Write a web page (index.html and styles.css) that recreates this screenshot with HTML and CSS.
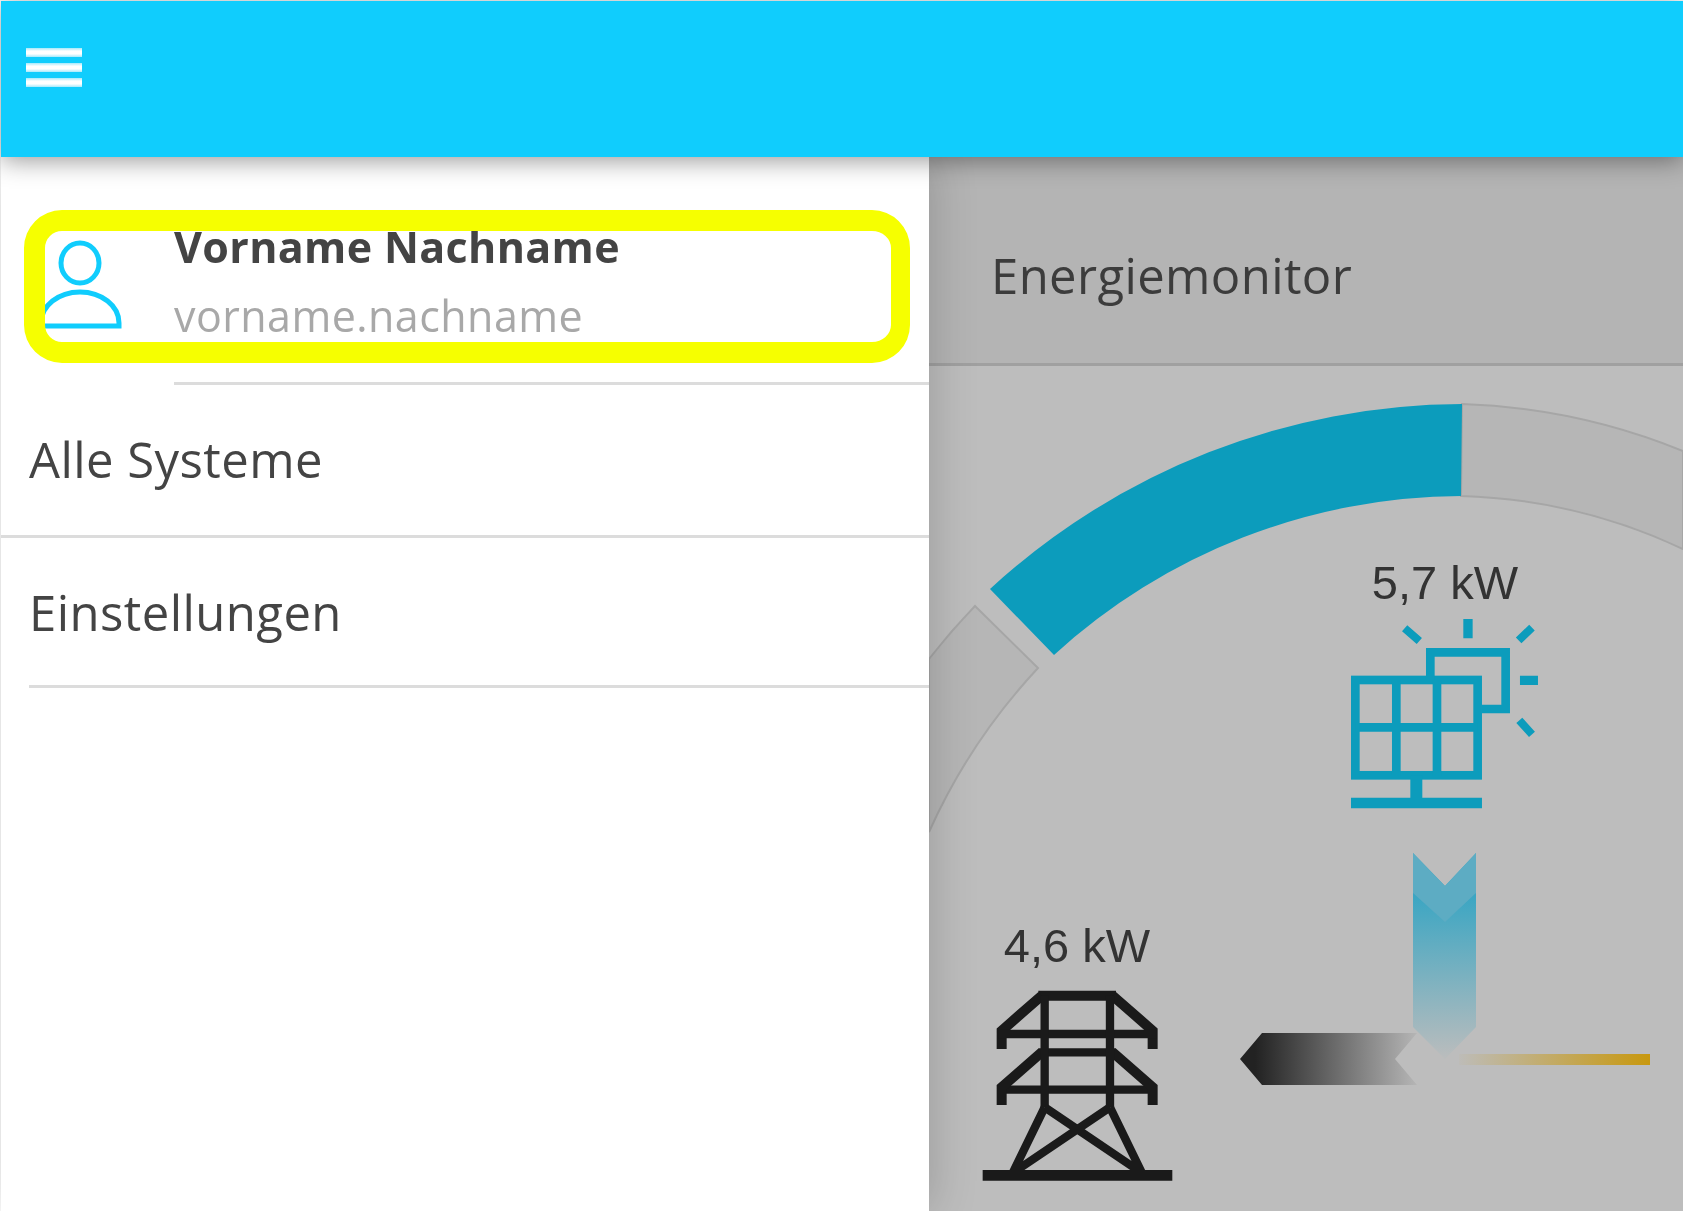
FILE: index.html
```html
<!DOCTYPE html>
<html lang="de">
<head>
<meta charset="utf-8">
<title>Energiemonitor</title>
<link rel="stylesheet" href="styles.css">
</head>
<body>
<div class="app">
  <header class="topbar">
    <button class="menu-btn" aria-label="Menü"><span></span><span></span><span></span></button>
  </header>
  <main class="content">
    <nav class="drawer">
      <div class="user-row">
        <svg class="user-icon" viewBox="0 0 80 90" aria-hidden="true">
          <ellipse cx="34" cy="22" rx="19" ry="20" class="user-stroke"/>
          <path d="M-5 85 V 82 A 39 31 0 0 1 73 82 V 85 Z" class="user-stroke"/>
        </svg>
        <div class="user-text">
          <div class="user-name">Vorname Nachname</div>
          <div class="user-login">vorname.nachname</div>
        </div>
        <div class="highlight"></div>
      </div>
      <div class="nav-item nav-first">Alle Systeme</div>
      <div class="nav-item nav-second">Einstellungen</div>
    </nav>
    <section class="panel">
      <div class="panel-title">Energiemonitor</div>
      <div class="diagram">
        <svg class="diagram-svg" viewBox="929 367 754 844" aria-label="Energiefluss">
          <defs>
            <linearGradient id="gSolar" x1="0" y1="890" x2="0" y2="1057" gradientUnits="userSpaceOnUse">
              <stop offset="0" stop-color="#36a5c3"/>
              <stop offset="1" stop-color="#36a5c3" stop-opacity="0.03"/>
            </linearGradient>
            <linearGradient id="gGrid" x1="1255" y1="0" x2="1417" y2="0" gradientUnits="userSpaceOnUse">
              <stop offset="0" stop-color="#222"/>
              <stop offset="1" stop-color="#222" stop-opacity="0.05"/>
            </linearGradient>
            <linearGradient id="gHome" x1="1459" y1="0" x2="1650" y2="0" gradientUnits="userSpaceOnUse">
              <stop offset="0" stop-color="#c8980f" stop-opacity="0.03"/>
              <stop offset="1" stop-color="#c8980f"/>
            </linearGradient>
          </defs>

          <path class="ring-rest" d="M975 607 L1038 669 A 598 598 0 0 0 929 833 L929 660 A 692 692 0 0 1 975 607 Z"/>
          <path class="ring-rest" d="M1462 405 A 640 640 0 0 1 1683 452 L1683 550 A 560 560 0 0 0 1461 497 Z"/>
          <path class="ring-fill" d="M990 590 A 701 701 0 0 1 1462 405 L1461 497 A 607 607 0 0 0 1054 656 Z"/>

          <text class="value" x="1445" y="600" text-anchor="middle">5,7 kW</text>
          <g class="solar" transform="translate(1280 540) scale(.3333)">
            <rect x="226" y="423" width="367" height="286"/>
            <path d="M349 423 V709 M471 423 V709 M226 565 H593"/>
            <path d="M451 423 V340 H677 V510 H606"/>
            <path class="stand" d="M409 709 V792"/>
            <path class="base" d="M213 792 H606"/>
            <path class="ray" d="M564 240 V298 M720 424 H774"/>
            <path class="ray-slant" d="M374 268 L418 306 M756 266 L716 304 M718 544 L756 586"/>
          </g>

          <path d="M1413 854 L1445 887 L1476 854 V1028 L1445 1060 L1413 1028 Z" fill="url(#gSolar)"/>
          <path d="M1413 854 L1445 887 L1476 854 V894 L1445 923 L1413 894 Z" fill="#5dacc3"/>
          <path d="M1240 1060 L1262 1034 H1417 L1395 1060 L1417 1086 H1262 Z" fill="url(#gGrid)"/>
          <rect x="1459" y="1055" width="191" height="11" fill="url(#gHome)"/>

          <text class="value" x="1077" y="963" text-anchor="middle">4,6 kW</text>
          <g class="tower" transform="translate(970 980) scale(.3333)">
            <path d="M205 50 H438"/>
            <path d="M215 50 L95 155 V210 M428 50 L548 155 V210"/>
            <path class="thin" d="M85 165 H560 M205 220 H438 M85 332 H560"/>
            <path d="M215 220 L95 325 V378 M428 220 L548 325 V378"/>
            <path class="thin" d="M224 50 V385 M420 50 V385"/>
            <path class="thin" d="M224 385 L128 582 M420 385 L516 582 M224 385 L510 578 M420 385 L134 578"/>
            <path class="base" d="M38 589 H607"/>
          </g>
        </svg>
      </div>
    </section>
  </main>
</div>
</body>
</html>
```
FILE: styles.css
```css
* { box-sizing: border-box; }

html, body {
  margin: 0;
  height: 100%;
  background: #fff;
  overflow: hidden;
}

body {
  font-family: "Open Sans", "Noto Sans", sans-serif;
  color: #444;
}

.app {
  height: 1211px;
  padding: 1px 0 0 1px;
  display: flex;
  flex-direction: column;
}

.topbar {
  position: relative;
  z-index: 3;
  flex: 0 0 156px;
  background: #10cdfd;
  box-shadow: 0 3px 24px rgba(0, 0, 0, .42);
  padding: 47px 0 0 25px;
}

.menu-btn {
  display: flex;
  flex-direction: column;
  gap: 6px;
  width: 56px;
  padding: 0;
  border: 0;
  background: none;
}

.menu-btn span {
  display: block;
  height: 9px;
  background: linear-gradient(#a5e9fb, #fff 35% 65%, #a5e9fb);
}

.content {
  flex: 1;
  display: flex;
  min-height: 0;
}

.drawer {
  position: relative;
  z-index: 2;
  flex: 0 0 928px;
  background: #fff;
  box-shadow: 0 0 46px rgba(0, 0, 0, .2);
}

.user-row {
  position: relative;
  display: flex;
  height: 228px;
  margin-left: 173px;
  border-bottom: 3px solid #dcdcdc;
  padding-top: 60px;
}

.user-icon {
  position: absolute;
  left: -128px;
  top: 84px;
  width: 80px;
  height: 90px;
  overflow: visible;
}

.user-stroke {
  fill: none;
  stroke: #10cdfd;
  stroke-width: 5;
}

.user-name,
.user-login,
.nav-item,
.panel-title,
.value {
  filter: blur(.3px);
}

.user-name {
  font-size: 43px;
  line-height: 60px;
  font-weight: 700;
  color: #444;
  letter-spacing: .35px;
}

.user-login {
  font-size: 43px;
  line-height: 60px;
  margin-top: 9px;
  color: #a8a8a8;
  letter-spacing: .45px;
}

.highlight {
  position: absolute;
  left: -150px;
  top: 53px;
  width: 886px;
  height: 153px;
  border: 21px solid #f6ff00;
  border-right-width: 19px;
  border-radius: 38px;
  pointer-events: none;
}

.nav-item {
  font-size: 49px;
  line-height: 66px;
  letter-spacing: .45px;
  color: #444;
}

.nav-first {
  height: 153px;
  padding: 41px 0 0 28px;
  border-bottom: 3px solid #dcdcdc;
}

.nav-second {
  height: 150px;
  margin-left: 28px;
  padding-top: 41px;
  border-bottom: 3px solid #dcdcdc;
}

.panel {
  flex: 1;
  min-width: 0;
  display: flex;
  flex-direction: column;
  background: #bdbdbd;
}

.panel-title {
  flex: 0 0 209px;
  padding: 85px 0 0 62px;
  background: #b4b4b4;
  border-bottom: 3px solid #a0a0a0;
  font-size: 49px;
  line-height: 66px;
  letter-spacing: .4px;
  color: #3c3c3c;
}

.diagram {
  flex: 1;
  min-height: 0;
  overflow: hidden;
}

.diagram-svg {
  display: block;
  width: 754px;
  height: 844px;
}

.ring-fill { fill: #0c9cbc; }

.ring-rest {
  fill: #b6b6b6;
  stroke: #a6a6a6;
  stroke-width: 2;
}

.value {
  font-family: "Liberation Sans", Arial, sans-serif;
  font-size: 47px;
  fill: #333;
}

.solar {
  fill: none;
  stroke: #0c9cbc;
  stroke-width: 26;
  filter: blur(.4px);
}

.solar .stand { stroke-width: 36; }
.solar .base { stroke-width: 32; }
.solar .ray { stroke-width: 28; }
.solar .ray-slant { stroke-width: 24; }

.tower {
  fill: none;
  stroke: #1a1a1a;
  stroke-width: 30;
  filter: blur(.5px);
}

.tower .thin { stroke-width: 25; }
.tower .base { stroke-width: 32; }
```
